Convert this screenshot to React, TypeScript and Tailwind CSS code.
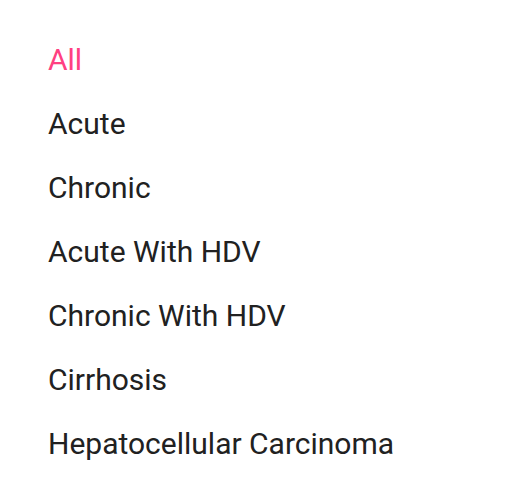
const items = [
  "All",
  "Acute",
  "Chronic",
  "Acute With HDV",
  "Chronic With HDV",
  "Cirrhosis",
  "Hepatocellular Carcinoma",
];

export default function App() {
  return (
    <div className="w-[512px] h-[504px] bg-white pt-[27px] font-['Roboto',sans-serif]">
      <ul className="flex flex-col">
        {items.map((item, i) => (
          <li
            key={item}
            className={
              "h-[64px] flex items-center pl-[48px] text-[30px] " +
              (i === 0 ? "text-[#ff4081]" : "text-[#212121]")
            }
          >
            {item}
          </li>
        ))}
      </ul>
    </div>
  );
}
